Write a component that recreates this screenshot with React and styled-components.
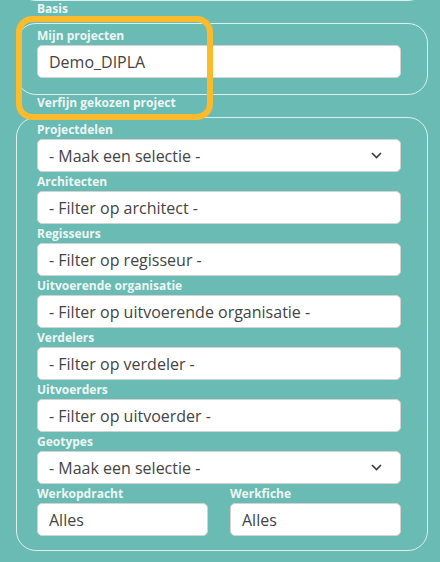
import React from "react"
import styled, { createGlobalStyle } from "styled-components"

const GlobalStyle = createGlobalStyle`
  html, body {
    margin: 0;
    padding: 0;
    background: #6abbb3;
    font-family: "Open Sans", "DejaVu Sans", sans-serif;
  }
`

const filters = [
  { label: "Projectdelen", text: "- Maak een selectie -", select: true },
  { label: "Architecten", text: "- Filter op architect -" },
  { label: "Regisseurs", text: "- Filter op regisseur -" },
  { label: "Uitvoerende organisatie", text: "- Filter op uitvoerende organisatie -" },
  { label: "Verdelers", text: "- Filter op verdeler -" },
  { label: "Uitvoerders", text: "- Filter op uitvoerder -" },
  { label: "Geotypes", text: "- Maak een selectie -", select: true },
]

const Chevron = () => (
  <svg width="11" height="7" viewBox="0 0 11 7">
    <path d="M1 1l4.5 4.5L10 1" fill="none" stroke="#3a3a3a" strokeWidth="1.6" />
  </svg>
)

const App = () => {
  return (
    <Page>
      <GlobalStyle />
      <CutBox />
      <Legend>Basis</Legend>
      <Box $pb={16}>
        <FieldLabel>Mijn projecten</FieldLabel>
        <Input>Demo_DIPLA</Input>
      </Box>
      <Legend>Verfijn gekozen project</Legend>
      <Box>
        {filters.map((f) => (
          <React.Fragment key={f.label}>
            <FieldLabel>{f.label}</FieldLabel>
            <Input>
              {f.text}
              {f.select && <Chevron />}
            </Input>
          </React.Fragment>
        ))}
        <Split>
          <div>
            <FieldLabel>Werkopdracht</FieldLabel>
            <Input>Alles</Input>
          </div>
          <div>
            <FieldLabel>Werkfiche</FieldLabel>
            <Input>Alles</Input>
          </div>
        </Split>
      </Box>
      <Highlight />
    </Page>
  )
}

const Page = styled.div`
  position: relative;
  padding: 0 12px 12px 16px;
  height: 562px;
  box-sizing: border-box;
  overflow: hidden;
`

const Box = styled.div`
  border: 1px solid rgba(240, 248, 246, 0.85);
  border-radius: 20px;
  padding: 2px 26px ${(p) => p.$pb || 14}px 20px;
`

const CutBox = styled(Box)`
  height: 40px;
  margin-top: -39px;
  box-sizing: border-box;
`

const Legend = styled.div`
  margin: 1px 0 0 21px;
  height: 21px;
  line-height: 14px;
  font-size: 12px;
  font-weight: 700;
  color: #edf6f4;
`

const FieldLabel = styled.div`
  height: 19px;
  line-height: 19px;
  font-size: 12px;
  font-weight: 700;
  color: #edf6f4;
  white-space: nowrap;
`

const Input = styled.div`
  height: 33px;
  box-sizing: border-box;
  background: #fff;
  border: 1px solid #d3d3d3;
  border-radius: 5px;
  padding: 0 18px 0 11px;
  display: flex;
  align-items: center;
  justify-content: space-between;
  font-size: 16px;
  color: #444;
`

const Split = styled.div`
  display: grid;
  grid-template-columns: 1fr 1fr;
  column-gap: 22px;
`

const Highlight = styled.div`
  position: absolute;
  left: 16px;
  top: 16px;
  width: 197px;
  height: 104px;
  box-sizing: border-box;
  border: 6px solid #fbbb2d;
  border-radius: 16px;
  pointer-events: none;
`

export default App
